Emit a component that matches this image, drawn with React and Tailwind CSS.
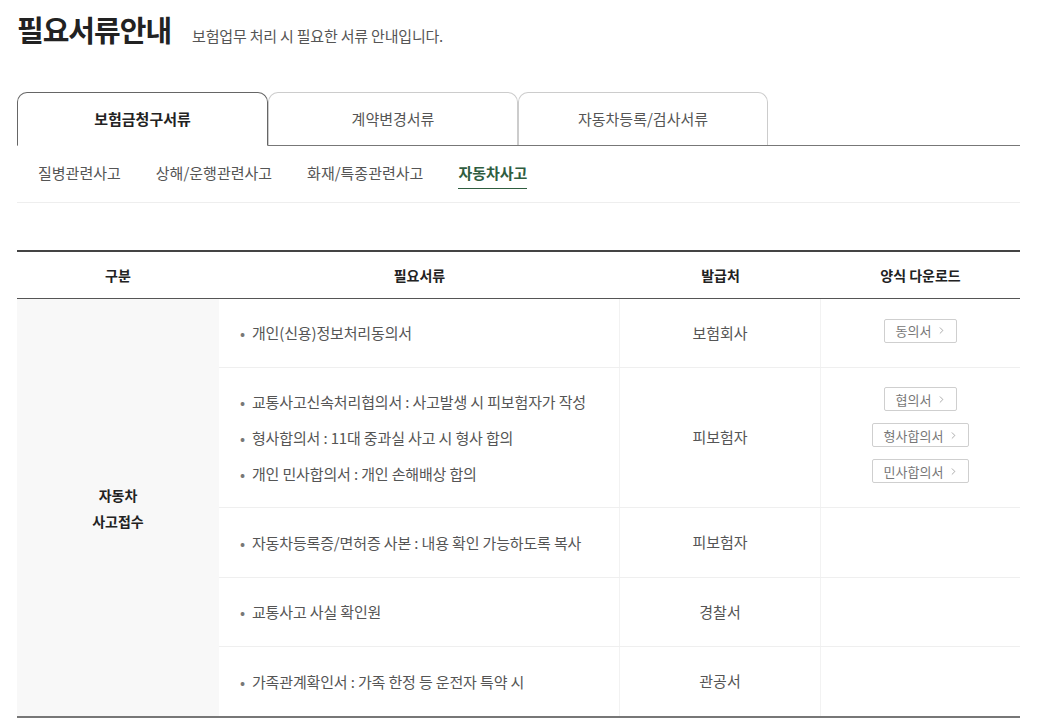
import { ChevronRight } from "lucide-react";

const font = { fontFamily: '"Noto Sans CJK KR", "Noto Sans", sans-serif' };

const mainTabs = ["보험금청구서류", "계약변경서류", "자동차등록/검사서류"];
const subTabs = ["질병관련사고", "상해/운행관련사고", "화재/특종관련사고", "자동차사고"];

const rows = [
  { items: ["개인(신용)정보처리동의서"], issuer: "보험회사", forms: ["동의서"], h: "h-[69px]" },
  {
    items: [
      "교통사고신속처리협의서 : 사고발생 시 피보험자가 작성",
      "형사합의서 : 11대 중과실 사고 시 형사 합의",
      "개인 민사합의서 : 개인 손해배상 합의",
    ],
    issuer: "피보험자",
    forms: ["협의서", "형사합의서", "민사합의서"],
    h: "h-[140px]",
  },
  { items: ["자동차등록증/면허증 사본 : 내용 확인 가능하도록 복사"], issuer: "피보험자", forms: [], h: "h-[70px]" },
  { items: ["교통사고 사실 확인원"], issuer: "경찰서", forms: [], h: "h-[69px]" },
  { items: ["가족관계확인서 : 가족 한정 등 운전자 특약 시"], issuer: "관공서", forms: [], h: "h-[69px]" },
];

function FormButton({ label }) {
  return (
    <button className="flex items-center gap-[5px] h-6 pl-[11px] pr-[9px] border border-[#cfcfcf] rounded-[2px] bg-white text-[13px] text-[#777] leading-none">
      {label}
      <ChevronRight size={11} strokeWidth={1.5} className="text-[#888]" />
    </button>
  );
}

export default function App() {
  return (
    <div className="w-[1044px] h-[728px] bg-white overflow-hidden" style={font}>
      <div className="pl-[17px] pr-[24px]">
        {/* title */}
        <div className="flex items-end gap-[21px] pt-[4px] h-[44px]">
          <h1 className="text-[29px] font-bold text-[#222] leading-none tracking-[-1px]">필요서류안내</h1>
          <p className="text-[15px] text-[#555] leading-none pb-[1px] tracking-[-0.2px]">보험업무 처리 시 필요한 서류 안내입니다.</p>
        </div>

        {/* main tabs */}
        <div className="mt-[48px] flex border-b border-[#777] h-[54px]">
          {mainTabs.map((t, i) => (
            <div
              key={t}
              className={
                i === 0
                  ? "w-[251px] -mb-px flex items-center justify-center border border-[#666] border-b-white rounded-t-[10px] bg-white text-[15px] font-bold text-[#222]"
                  : "w-[250px] flex items-center justify-center border border-b-0 border-[#ccc] rounded-t-[10px] text-[15px] text-[#555]"
              }
            >
              {t}
            </div>
          ))}
        </div>

        {/* sub tabs */}
        <div className="flex border-b border-[#eee] h-[57px] pl-[21px] gap-[35px] pt-[17px]">
          {subTabs.map((t, i) => (
            <div
              key={t}
              className={
                i === 3
                  ? "h-[26px] border-b border-[#2f5d3f] text-[15px] font-bold text-[#2f5d3f] leading-[20px]"
                  : "h-[26px] text-[15px] text-[#555] leading-[20px]"
              }
            >
              {t}
            </div>
          ))}
        </div>

        {/* table */}
        <div className="mt-[47px] border-t-2 border-[#444]">
          <div className="flex h-[47px] items-center border-b border-[#555] text-[14px] font-bold text-[#222]">
            <div className="w-[202px] text-center">구분</div>
            <div className="w-[401px] text-center">필요서류</div>
            <div className="w-[201px] text-center">발급처</div>
            <div className="w-[199px] text-center">양식 다운로드</div>
          </div>
          <div className="flex border-b-2 border-[#777]">
            <div className="w-[202px] bg-[#f8f8f8] flex items-center justify-center text-center text-[14px] font-bold text-[#222] leading-[26px]">
              자동차<br />사고접수
            </div>
            <div className="flex-1">
              {rows.map((r, idx) => (
                <div
                  key={idx}
                  className={`flex ${r.h} ${idx < rows.length - 1 ? "border-b border-[#efefef]" : ""}`}
                >
                  <div className="w-[401px] border-r border-[#f2f2f2] flex flex-col justify-center gap-[14px] pl-[21px] text-[15px] text-[#555] leading-[22px] tracking-[-0.15px]">
                    {r.items.map((it) => (
                      <div key={it} className="flex gap-[7px]">
                        <span className="text-[#777]">•</span>
                        <span>{it}</span>
                      </div>
                    ))}
                  </div>
                  <div className="w-[201px] border-r border-[#f2f2f2] flex items-center justify-center text-[15px] text-[#555]">
                    {r.issuer}
                  </div>
                  <div className="w-[199px] flex flex-col items-center justify-center gap-[12px] pb-[5px]">
                    {r.forms.map((f) => (
                      <FormButton key={f} label={f} />
                    ))}
                  </div>
                </div>
              ))}
            </div>
          </div>
        </div>
      </div>
    </div>
  );
}
